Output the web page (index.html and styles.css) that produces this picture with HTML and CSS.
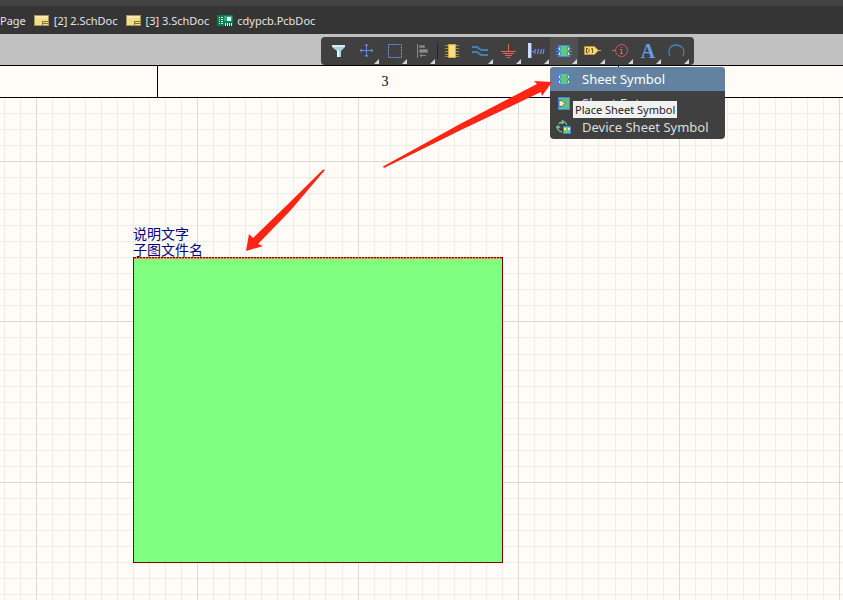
FILE: index.html
```
<!DOCTYPE html>
<html lang="zh-CN">
<head>
<meta charset="utf-8">
<title>Schematic editor</title>
<link rel="stylesheet" href="styles.css">
</head>
<body>
<svg class="defs" aria-hidden="true">
  <symbol id="doc" viewBox="0 0 16 12">
    <path d="M0 0h15v11H0z" fill="#a89458"/><path d="M1 1h13v9H1z" fill="#f6dd87"/><path d="M1 1h13v2H1z" fill="#fbeab2"/>
    <path d="M8 6.500h6M8 8.500h6M8.500 6v4" stroke="#80714a" fill="none"/>
  </symbol>
  <symbol id="sheet" viewBox="0 0 16 14">
    <path d="M0 4.500h16M0 7.500h16M0 10.500h16" stroke="#4d80e8"/>
    <path d="M2 1h12v12H2z" fill="#4d80e8"/><path d="M3 2h10v10H3z" fill="#5fc984"/>
    <path d="M3 4h1v2H3zM3 9h1v2H3zM12 4h1v2h-1zM12 9h1v2h-1z" fill="#fff69a"/>
    <path d="M3 2.500h1l1 2-1 2H3M3 7.500h1l1 2-1 2H3M13 2.500h-1l-1 2 1 2h1M13 7.500h-1l-1 2 1 2h1" fill="none" stroke="#3c70d8" stroke-width=".7"/>
  </symbol>
</svg>

<header class="topbar">
  <nav class="tabs" aria-label="Documents">
    <a class="tab" href="#home">Page</a>
    <a class="tab" href="#s2"><svg class="tab-icon" viewBox="0 0 16 12"><use href="#doc"/></svg>[2] 2.SchDoc</a>
    <a class="tab" href="#s3"><svg class="tab-icon" viewBox="0 0 16 12"><use href="#doc"/></svg>[3] 3.SchDoc</a>
    <a class="tab" href="#pcb"><svg class="tab-icon" viewBox="0 0 16 12"><path d="M0 0h16v10H7v1H0z" fill="#087d50"/><path d="M2 2.500h1M4 2.500h2M2 4.500h1M4 4.500h2M2 6.500h1M4 6.500h2M2 8.500h1M4 8.500h2" stroke="#d8f2dc"/><path d="M7 1h8v5H7z" fill="#35a879"/><path d="M10 2h4v4h-4z" fill="#eefbff"/><path d="M8.500 8v3M10.500 8v3M12.500 8v3M14.500 8v3" stroke="#e8efb4"/></svg>cdypcb.PcbDoc</a>
  </nav>
</header>

<div class="strip">
  <div class="toolbar" role="toolbar" aria-label="Active bar">
    <button class="tool plain" aria-label="Filter"><svg viewBox="0 0 28 28"><path d="M8 8h13v2l-4 4v6h-4v-6L8 10z" fill="#a9d3e2"/><path d="M8 8h13v2H8z" fill="#d4edf5"/><path d="M13 13h2v7h-2z" fill="#e6f7fb"/></svg></button>
    <button class="tool" aria-label="Move"><svg viewBox="0 0 28 28"><path d="M8 13.500h13M14.500 7v13M10 12l-2 1.500 2 1.500M19 12l2 1.500-2 1.500M13 9l1.500-2L16 9M13 18l1.500 2 1.500-2" stroke="#6389e3" fill="none"/></svg></button>
    <button class="tool" aria-label="Select"><svg viewBox="0 0 28 28"><path d="M8.500 7.500h13v13h-13z" fill="none" stroke="#7198f0" stroke-dasharray="2 1"/></svg></button>
    <button class="tool" aria-label="Align"><svg viewBox="0 0 28 28"><path d="M9.500 7v14" stroke="#8a8a8a"/><path d="M11.500 8.500h5v2h-5zM11.500 12.500h8v3h-8z" fill="#8c8c8c" stroke="#737373"/><path d="M12 18.500h6M14 17l-2 1.500 2 1.500" stroke="#858585" fill="none"/></svg></button>
    <span class="divider"></span>
    <button class="tool plain" aria-label="Part"><svg viewBox="0 0 28 28"><path d="M7 8.500h14M7 11.500h14M7 14.500h14M7 17.500h14M7 19.500h14" stroke="#a5883c"/><path d="M10 7h8v14h-8z" fill="#d5a83e"/><path d="M11 8h6v12h-6z" fill="#f8dc83"/></svg></button>
    <button class="tool" aria-label="Wire"><svg viewBox="0 0 28 28"><path d="M6 10h5l4 3h7M6 15h5l4 3h7" stroke="#4380b8" stroke-width="2" fill="none"/></svg></button>
    <button class="tool" aria-label="Power port"><svg viewBox="0 0 28 28"><path d="M14 7h1v7h-1zM7 14h15v1H7zM9 16h11v1H9zM11 18h7v1h-7zM13 20h3v1h-3z" fill="#e96055"/></svg></button>
    <button class="tool" aria-label="Harness"><svg viewBox="0 0 28 28"><path d="M6 6h3v15H6z" fill="#c9defc"/><path d="M9.500 6v15M9 14.500h4" stroke="#5f87e0"/><path d="M12.500 17l1-5M15.500 17l1-5M18.500 17l1-5M21 17l1-5" stroke="#6389e3" stroke-width="1.300" fill="none"/></svg></button>
    <button class="tool active" aria-label="Sheet symbol" aria-expanded="true"><svg viewBox="0 0 28 28"><use href="#sheet" x="6" y="7" width="16" height="14"/></svg></button>
    <button class="tool" aria-label="Port"><svg viewBox="0 0 28 28"><path d="M20 13.500h3" stroke="#dcae4a"/><path d="M6.500 9.500h10l4 4-4 4h-10z" fill="#f6d778" stroke="#bd973f"/><path d="M8.500 11v5M8 11.500h2l1 1v2l-1 1H8M13 12l1.500-.5V16" fill="none" stroke="#6f5521"/></svg></button>
    <button class="tool" aria-label="Directive"><svg viewBox="0 0 28 28"><circle cx="15.500" cy="13.500" r="6" fill="none" stroke="#d9535b"/><path d="M6 13.500h4" stroke="#d9535b"/><path d="M15 10.500h1M14 12.500h1.500v4M14 16.500h3" stroke="#e45e62" fill="none"/></svg></button>
    <button class="tool letter" aria-label="Text">A</button>
    <button class="tool" aria-label="Arc"><svg viewBox="0 0 28 28"><path d="M8 19C5 12 9 8 14 8s10 4 7 11" fill="none" stroke="#4380b8" stroke-width="1.300"/></svg></button>
    <div class="menu" role="menu">
      <button class="item selected" role="menuitem"><svg viewBox="0 0 16 14"><use href="#sheet"/></svg>Sheet Symbol</button>
      <button class="item" role="menuitem"><svg viewBox="0 0 16 14"><path d="M2.500 1.500h11v12h-11z" fill="#5fbd85" stroke="#4d80e8"/><path d="M3 4.500h3l3 3-3 3H3z" fill="#fff483" stroke="#3465cf"/></svg>Sheet Entry</button>
      <button class="item" role="menuitem"><svg viewBox="0 0 16 14"><path d="M3 4c1-2 3-2 5-2M6 0l2 2-2 2M2 6c-1 3 0 5 4 6M0 8l2-2 2 2M9 2l2 3" fill="none" stroke="#70c68e" stroke-width="1.300"/><path d="M7.500 6.500h7v7h-7z" fill="#68cf78" stroke="#4d80e8"/><path d="M8 8h2v2H8zM12 8h2v2h-2z" fill="#fff483"/></svg>Device Sheet Symbol</button>
      <div class="tooltip" role="tooltip">Place Sheet Symbol</div>
    </div>
  </div>
</div>

<main class="editor">
  <div class="ruler">
    <span class="zone"></span>
    <span class="zone wide">3</span>
    <span class="zone"></span>
  </div>
  <div class="sheet">
    <svg class="grid" id="grid" aria-hidden="true"></svg>
    <section class="block">
      <div class="label">说明文字</div>
      <div class="label">子图文件名</div>
      <div class="body"></div>
    </section>
  </div>
</main>

<svg class="arrows" viewBox="0 0 843 600" aria-hidden="true">
  <path d="M325 170L290 211L258 244L263 246L246 251L249 234L253 238L286 206L323 169.500z"/>
  <path d="M383 166.500L460 124L537 84L534 81L552 82L542 96L541 92L463 129L384 168z"/>
</svg>
<script src="grid.js"></script>
</body>
</html>
```
FILE: styles.css
```
* { box-sizing: border-box; }
body {
  margin: 0;
  height: 100vh;
  display: flex;
  flex-direction: column;
  overflow: hidden;
  background: #fffcf7;
  font-family: "Noto Sans", "Noto Sans CJK SC", sans-serif;
}
button { border: 0; padding: 0; background: none; color: inherit; font: inherit; }
.defs { position: absolute; width: 0; height: 0; }

.topbar { border-top: 6px solid #424242; background: #353535; }
.tabs { display: flex; gap: 8px; height: 28px; padding-top: 1px; align-items: center; }
.tab {
  display: flex;
  align-items: center;
  gap: 4px;
  color: #e4e4e4;
  font-size: 11px;
  line-height: 17px;
  text-decoration: none;
  white-space: nowrap;
}
.tab-icon { width: 16px; height: 12px; }

.strip { height: 31px; padding: 3px 0 0 321px; background: #c1c1c1; }
.toolbar {
  position: relative;
  z-index: 2;
  display: flex;
  width: max-content;
  height: 28px;
  padding: 0 4px 0 3px;
  border-radius: 4px;
  background: #404040;
}
.tool { position: relative; width: 28px; height: 28px; }
.tool svg { display: block; width: 28px; height: 28px; }
.tool::after {
  content: "";
  position: absolute;
  right: 1px;
  bottom: 1px;
  border-left: 5px solid transparent;
  border-bottom: 5px solid #d5d5d5;
}
.tool.plain::after { content: none; }
.tool.active { background: #505050; }
.divider { width: 1px; height: 16px; margin: 6px 0 0 1px; background: #222; }
.letter { color: #62a0e3; font: bold 20px "Liberation Serif", serif; }

.menu {
  position: absolute;
  top: 30px;
  left: 229px;
  width: 175px;
  border-radius: 4px;
  background: #404040;
  color: #dedede;
}
.item {
  display: flex;
  align-items: center;
  gap: 10px;
  width: 100%;
  height: 24px;
  padding-left: 6px;
  border-radius: 0 0 4px 4px;
  font-size: 13px;
  line-height: 24px;
  text-align: left;
}
.item svg { width: 16px; height: 14px; }
.item.selected { border-radius: 4px 4px 0 0; background: #6382a2; color: #fff; }
.tooltip {
  position: absolute;
  top: 34px;
  left: 23px;
  padding: 0 2px;
  background: #f1f1f1;
  color: #222;
  font-size: 11px;
  line-height: 17px;
  white-space: nowrap;
}

.editor { flex: 1; display: flex; flex-direction: column; }
.ruler { display: flex; height: 33px; border: solid #000; border-width: 1px 0; }
.zone { flex: 0 0 158px; border-right: 1px solid #000; }
.zone.wide {
  flex-basis: 461px;
  padding-right: 6px;
  font: 14px/31px "Liberation Serif", serif;
  text-align: center;
}
.zone:last-child { flex: 1; border: 0; }
.sheet { position: relative; flex: 1; padding: 127px 0 0 133px; }
.grid { position: absolute; inset: 0; width: 100%; height: 100%; }
.grid .minor { stroke: #eeeee9; }
.grid .major { stroke: #d9d9d5; }
.block { position: relative; width: 370px; }
.label { color: #000080; font: 14px/16px "Noto Sans CJK SC", sans-serif; }
.body {
  height: 306px;
  border: 1px solid #800000;
  border-top: 0;
  background:
    linear-gradient(90deg, #800000 2px, #ff8040 0) 0 0 / 3px 1px repeat-x,
    linear-gradient(90deg, #ff7040 2px, #e0b850 0) 0 1px / 3px 1px repeat-x,
    #80ff80;
}
.arrows {
  position: absolute;
  top: 0;
  left: 0;
  z-index: 3;
  width: 843px;
  height: 600px;
  fill: #ff2413;
  pointer-events: none;
}
```
FILE: grid.js
```
// Draws the snap grid: every tenth line is a major one.
(function () {
  var svg = document.getElementById("grid");
  var step = 16.06;
  var box = svg.getBoundingClientRect();

  function add(cls, d) {
    var p = document.createElementNS("http://www.w3.org/2000/svg", "path");
    p.setAttribute("class", cls);
    p.setAttribute("d", d);
    svg.appendChild(p);
  }

  var minor = "", major = "";
  for (var i = -9; i < 200; i++) {
    var x = Math.round(36.4 + i * step - box.left) + 0.5;
    var y = Math.round(160.8 + i * step - box.top) + 0.5;
    var d = "";
    if (x > 0 && x < box.width) d += "M" + x + " 0V" + box.height;
    if (y > 0 && y < box.height) d += "M0 " + y + "H" + box.width;
    if (i % 10 === 0) major += d; else minor += d;
  }
  add("minor", minor);
  add("major", major);
})();
```
